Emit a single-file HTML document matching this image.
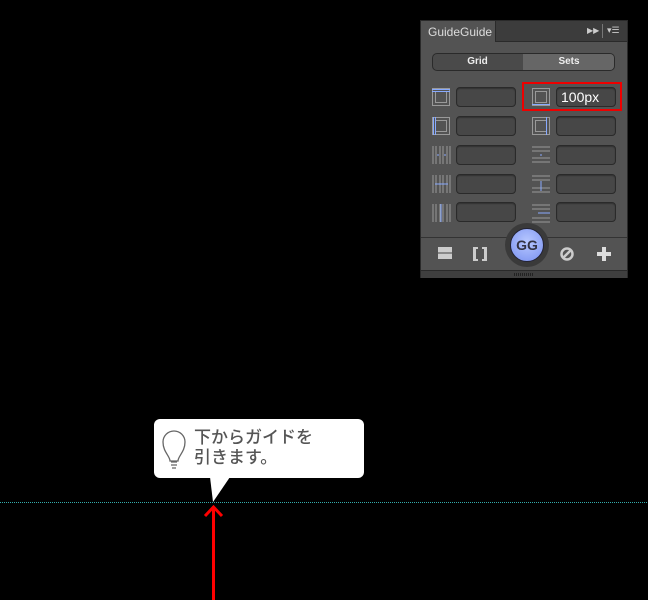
<!DOCTYPE html>
<html><head><meta charset="utf-8"><style>
body{margin:0;width:648px;height:600px;background:#000;position:relative;overflow:hidden;font-family:"Liberation Sans",sans-serif}
.a{position:absolute}
.panel{left:420px;top:20px;width:208px;height:258px;background:#535353;border:1px solid #2a2a2a;box-sizing:border-box}
.inp{position:absolute;width:58px;height:18px;background:#474747;border:1px solid #2a2a2a;border-radius:4px;box-shadow:inset 0 1px 1px #333}
</style></head><body>
<div class="a panel"></div>
<div class="a" style="left:421px;top:21px;width:206px;height:20px;background:#3c3c3c;border-bottom:1px solid #2a2a2a"></div>
<div class="a" style="left:421px;top:21px;width:75px;height:21px;background:#535353;border-right:1px solid #2a2a2a;color:#ddd;font-size:12px;line-height:22px;padding-left:7px;box-sizing:border-box">GuideGuide</div>
<div class="a" style="left:587px;top:26px;color:#ccc;font-size:8px">▶▶</div>
<div class="a" style="left:602px;top:24px;width:1px;height:14px;background:#777"></div>
<div class="a" style="left:607px;top:25px;color:#ccc;font-size:9px">▾☰</div>
<div class="a" style="left:432px;top:53px;width:183px;height:18px;border:1px solid #2a2a2a;border-radius:5px;background:#4a4a4a;box-sizing:border-box"></div>
<div class="a" style="left:523px;top:54px;width:91px;height:16px;background:#666;border-radius:0 4px 4px 0"></div>
<div class="a" style="left:432px;top:53px;width:91px;height:18px;color:#eee;font-size:10px;font-weight:bold;text-align:center;line-height:18px">Grid</div>
<div class="a" style="left:523px;top:53px;width:92px;height:18px;color:#eee;font-size:10px;font-weight:bold;text-align:center;line-height:18px">Sets</div>
<div class="inp" style="left:456px;top:87px"></div><div class="inp" style="left:556px;top:87px;color:#fff;font-size:14px;line-height:18px;text-indent:4px">100px</div>
<div class="inp" style="left:456px;top:116px"></div><div class="inp" style="left:556px;top:116px"></div>
<div class="inp" style="left:456px;top:145px"></div><div class="inp" style="left:556px;top:145px"></div>
<div class="inp" style="left:456px;top:174px"></div><div class="inp" style="left:556px;top:174px"></div>
<div class="inp" style="left:456px;top:202px"></div><div class="inp" style="left:556px;top:202px"></div>
<svg class="a" style="left:420px;top:80px" width="208" height="150" fill="none" stroke-width="1">
<g stroke="#999"><rect x="12.5" y="8.5" width="17" height="17"/><rect x="15.5" y="11.5" width="11" height="11"/></g>
<line x1="12" y1="9.5" x2="30" y2="9.5" stroke="#8af"/><line x1="12" y1="11.5" x2="30" y2="11.5" stroke="#8af"/>
<g stroke="#999"><rect x="12.5" y="37.5" width="17" height="17"/><rect x="15.5" y="40.5" width="11" height="11"/></g>
<line x1="13.5" y1="37" x2="13.5" y2="55" stroke="#8af"/><line x1="15.5" y1="37" x2="15.5" y2="55" stroke="#8af"/>
<g stroke="#999"><rect x="112.5" y="8.5" width="17" height="17"/><rect x="115.5" y="11.5" width="11" height="11"/></g>
<line x1="112" y1="24.5" x2="130" y2="24.5" stroke="#8af"/>
<g stroke="#999"><rect x="112.5" y="37.5" width="17" height="17"/><rect x="115.5" y="40.5" width="11" height="11"/></g>
<line x1="126.5" y1="37" x2="126.5" y2="55" stroke="#8af"/>
<g stroke="#999"><path d="M13 66v18M16 66v18M20 66v18M23 66v18M27 66v18M30 66v18M13 95v18M16 95v18M20 95v18M23 95v18M27 95v18M30 95v18M13 124v18M16 124v18M20 124v18M23 124v18M27 124v18M30 124v18"/>
<path d="M112 67h18M112 71h18M112 78h18M112 82h18M112 96h18M112 100h18M112 108h18M112 112h18M112 125h18M112 129h18M112 138h18M112 142h18"/></g>
<g stroke="#8af"><path d="M17 75h2M24 75h2M15 104h13M21 124v18M118 133h12M121 74v2M121 101v10"/></g>
</svg>
<div class="a" style="left:421px;top:237px;width:206px;height:1px;background:#333"></div>
<div class="a" style="left:505px;top:223px;width:44px;height:44px;border-radius:50%;background:#3a3a3a"></div>
<div class="a" style="left:510px;top:228px;width:34px;height:34px;border-radius:50%;background:radial-gradient(circle at 50% 40%,#b8c8ff,#7890f0);border:1px solid #223;box-sizing:border-box;color:#334;font-weight:bold;font-size:14px;text-align:center;line-height:32px">GG</div>
<svg class="a" style="left:430px;top:240px" width="190" height="28">
<path d="M8 7h14v5H8zM8 14h14v5H8z" fill="#ccc"/><rect x="8" y="12" width="14" height="2" fill="#888"/>
<path d="M43 7h5v2h-2v10h2v2h-5zM57 7h-5v2h2v10h-2v2h5z" fill="#ccc"/>
<circle cx="137" cy="14" r="5.5" fill="none" stroke="#ccc" stroke-width="2.5"/><path d="M133 18l8-8" stroke="#ccc" stroke-width="2.5"/>
<path d="M172 7h4v5h5v4h-5v5h-4v-5h-5v-4h5z" fill="#ddd"/>
</svg>
<div class="a" style="left:421px;top:270px;width:206px;height:7px;background:#3f3f3f;border-top:1px solid #2a2a2a"></div>
<div class="a" style="left:514px;top:273px;width:19px;height:3px;background:repeating-linear-gradient(90deg,#222 0 1px,transparent 1px 2px)"></div>
<div class="a" style="left:522px;top:82px;width:100px;height:29px;border:2px solid #e00;box-sizing:border-box"></div>
<div class="a" style="left:154px;top:419px;width:210px;height:59px;background:#fff;border-radius:6px"></div>
<svg class="a" style="left:150px;top:420px" width="90" height="82"><path d="M60 57 L63 82 L80 57Z" fill="#fff"/>
<g fill="none" stroke="#666" stroke-width="1.3"><path d="M20 41c0-5-7-9-7-19a11 11 0 0 1 22 0c0 10-7 14-7 19z"/><path d="M21 42h6M21 45h6M22 48h4"/></g></svg>
<div class="a" style="left:194px;top:428px;color:#555;font-size:17px;line-height:20px;font-family:'Liberation Sans','Noto Sans CJK JP',sans-serif;font-weight:500">下からガイドを<br>引きます。</div>
<div class="a" style="left:0;top:502px;width:648px;height:1px;background:repeating-linear-gradient(90deg,#3aa 0 1px,transparent 1px 2px)"></div>
<div class="a" style="left:212px;top:508px;width:3px;height:92px;background:#f00"></div>
<svg class="a" style="left:203px;top:503px" width="21" height="16"><path d="M2 13 L10.5 4 L19 13" fill="none" stroke="#f00" stroke-width="3"/></svg>
</body></html>
